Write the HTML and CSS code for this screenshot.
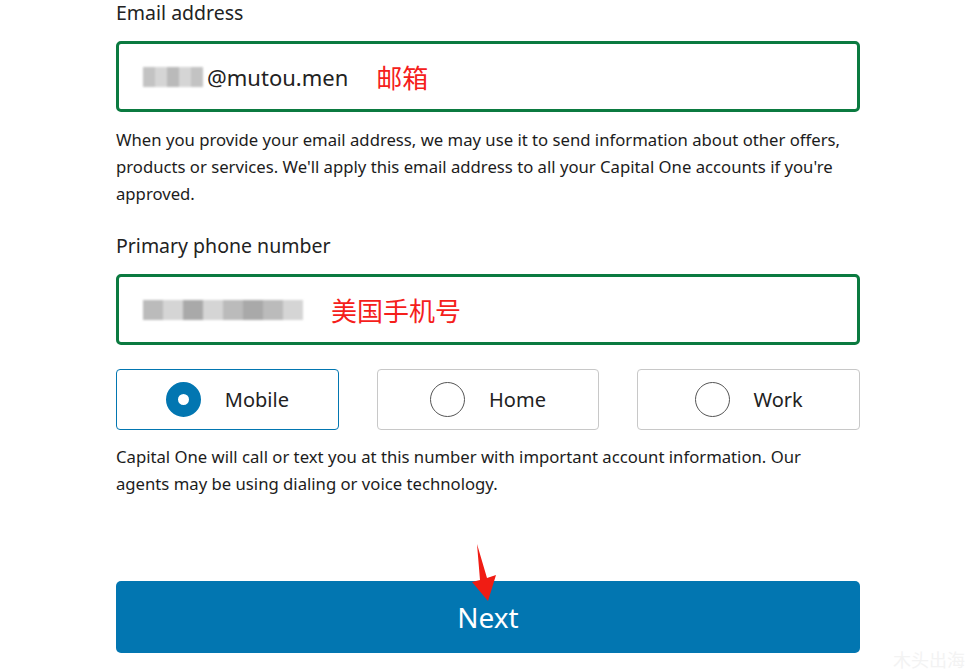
FILE: index.html
```html
<!DOCTYPE html>
<html lang="en">
<head>
    <meta charset="UTF-8">
    <meta name="viewport" content="width=device-width, initial-scale=1.0">
    <title>Contact information</title>
    <link rel="stylesheet" href="styles.css">
</head>
<body>
    <div class="form">
        <label class="field-label">Email address</label>
        <div class="text-input">
            <span class="blur blur-email"><i></i><i></i><i></i><i></i><i></i></span>
            <span class="value">@mutou.men</span>
            <span class="note">邮箱</span>
        </div>
        <p class="help">When you provide your email address, we may use it to send information about other offers, products or services. We'll apply this email address to all your Capital One accounts if you're approved.</p>

        <label class="field-label">Primary phone number</label>
        <div class="text-input">
            <span class="blur blur-phone"><i></i><i></i><i></i><i></i><i></i><i></i><i></i><i></i></span>
            <span class="note note-phone">美国手机号</span>
        </div>

        <div class="radio-row">
            <div class="radio-card selected"><span class="radio"></span>Mobile</div>
            <div class="radio-card"><span class="radio"></span>Home</div>
            <div class="radio-card"><span class="radio"></span>Work</div>
        </div>
        <p class="help help-phone">Capital One will call or text you at this number with important account information. Our agents may be using dialing or voice technology.</p>

        <button class="next-btn">Next</button>
    </div>

    <svg class="arrow" width="40" height="70" viewBox="0 0 40 70">
        <path d="M17 4 L27 38 L36 35 L28 61 L12 42 L20 40 Z" fill="#f01c14"/>
    </svg>

    <div class="watermark">木头出海</div>
</body>
</html>
```

FILE: styles.css
```css
body {
    margin: 0;
    font-family: "Noto Sans", "Noto Sans CJK SC", sans-serif;
    color: #1a1a1a;
    background: #fff;
    position: relative;
    height: 672px;
    overflow: hidden;
}
.form {
    width: 744px;
    margin-left: 116px;
    display: flex;
    flex-direction: column;
}
.field-label {
    font-size: 19.5px;
    line-height: 26px;
    color: #222;
}
.form .help + .field-label { margin-top: 26px; }
.text-input {
    margin-top: 15px;
    height: 65px;
    border: 3px solid #0b7a40;
    border-radius: 5px;
    display: flex;
    align-items: center;
    padding-left: 24px;
}
.value {
    font-size: 22px;
    color: #222;
}
.note {
    font-family: "Noto Sans CJK SC", sans-serif;
    color: #f5201b;
    font-size: 26px;
    margin-left: 28px;
}
.note-phone { margin-left: 28px; }
.blur {
    display: flex;
    height: 20px;
    filter: blur(1px);
}
.blur i { width: 12px; height: 20px; background: #aaa; }
.blur i:nth-child(2n) { background: #c4c4c4; }
.blur i:nth-child(3n) { background: #9d9d9d; }
.blur-email { margin-right: -2px; width: 66px; opacity: 0.7; }
.blur-phone i { width: 20px; background: #bbb; }
.blur-phone i:nth-child(2n) { background: #d5d5d5; }
.blur-phone i:nth-child(3n) { background: #a9a9a9; }
.help {
    margin: 14px 0 0;
    padding-right: 14px;
    font-size: 16.7px;
    line-height: 27px;
    color: #1c1c1c;
}
.help-phone { margin-top: 13px; }
.radio-row {
    display: flex;
    gap: 38px;
    margin-top: 24px;
}
.radio-card {
    flex: 1;
    height: 59px;
    border: 1px solid #c8c8c8;
    border-radius: 4px;
    display: flex;
    align-items: center;
    justify-content: center;
    gap: 24px;
    font-size: 20px;
    color: #222;
}
.radio-card.selected { border-color: #0276b1; }
.radio {
    width: 35px;
    height: 35px;
    box-sizing: border-box;
    border: 1px solid #555;
    border-radius: 50%;
}
.selected .radio {
    border: 12px solid #0276b1;
    background: #fff;
}
.next-btn {
    margin-top: 84px;
    height: 72px;
    border: none;
    border-radius: 5px;
    background: #0276b1;
    color: #fff;
    font-family: "Noto Sans", sans-serif;
    font-size: 28px;
}
.arrow {
    position: absolute;
    left: 460px;
    top: 540px;
}
.watermark {
    position: absolute;
    left: 893px;
    top: 648px;
    font-family: "Noto Sans CJK SC", sans-serif;
    font-size: 18px;
    line-height: 22px;
    color: #f3f3f3;
}
```
